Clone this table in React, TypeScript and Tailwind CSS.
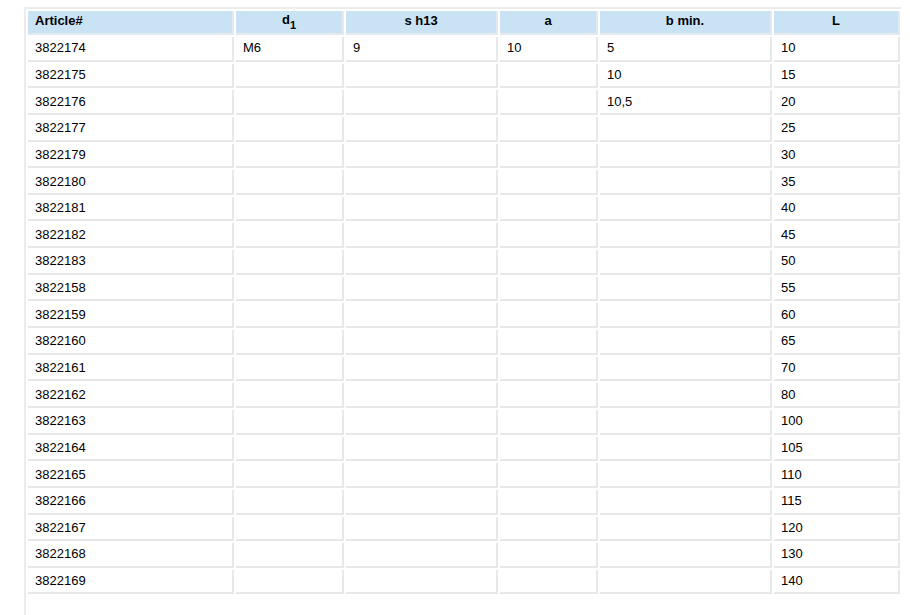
const rows: string[][] = [
  ["3822174", "M6", "9", "10", "5", "10"],
  ["3822175", "", "", "", "10", "15"],
  ["3822176", "", "", "", "10,5", "20"],
  ["3822177", "", "", "", "", "25"],
  ["3822179", "", "", "", "", "30"],
  ["3822180", "", "", "", "", "35"],
  ["3822181", "", "", "", "", "40"],
  ["3822182", "", "", "", "", "45"],
  ["3822183", "", "", "", "", "50"],
  ["3822158", "", "", "", "", "55"],
  ["3822159", "", "", "", "", "60"],
  ["3822160", "", "", "", "", "65"],
  ["3822161", "", "", "", "", "70"],
  ["3822162", "", "", "", "", "80"],
  ["3822163", "", "", "", "", "100"],
  ["3822164", "", "", "", "", "105"],
  ["3822165", "", "", "", "", "110"],
  ["3822166", "", "", "", "", "115"],
  ["3822167", "", "", "", "", "120"],
  ["3822168", "", "", "", "", "130"],
  ["3822169", "", "", "", "", "140"],
];

export default function App() {
  return (
    <div className="w-[910px] h-[615px] bg-white overflow-hidden font-['Liberation_Sans',Arial,sans-serif] text-[13px] text-black">
      <div className="ml-[24px] mt-[7px] w-[877px] h-[620px] border-l-2 border-t-2 border-[#ececec]">
        <table className="table-fixed border-separate border-spacing-[2px] w-[876px]">
          <colgroup>
            <col className="w-[206px]" />
            <col className="w-[108px]" />
            <col className="w-[152px]" />
            <col className="w-[98px]" />
            <col className="w-[172px]" />
            <col className="w-[126px]" />
          </colgroup>
          <thead>
            <tr>
              <th className="h-[24px] bg-[#c9e3f5] border-r-2 border-b-2 border-[#e3e9ee] pl-[7px] pr-2 pb-[3px] text-left font-bold leading-none">
                Article#
              </th>
              <th className="h-[24px] bg-[#c9e3f5] border-r-2 border-b-2 border-[#e3e9ee] px-2 pb-[3px] text-center font-bold leading-none">
                d<sub className="text-[11px] align-[-3px] leading-none">1</sub>
              </th>
              <th className="h-[24px] bg-[#c9e3f5] border-r-2 border-b-2 border-[#e3e9ee] px-2 pb-[3px] text-center font-bold leading-none">
                s h13
              </th>
              <th className="h-[24px] bg-[#c9e3f5] border-r-2 border-b-2 border-[#e3e9ee] px-2 pb-[3px] text-center font-bold leading-none">
                a
              </th>
              <th className="h-[24px] bg-[#c9e3f5] border-r-2 border-b-2 border-[#e3e9ee] px-2 pb-[3px] text-center font-bold leading-none">
                b min.
              </th>
              <th className="h-[24px] bg-[#c9e3f5] border-r-2 border-b-2 border-[#e3e9ee] px-2 pb-[3px] text-center font-bold leading-none">
                L
              </th>
            </tr>
          </thead>
          <tbody>
            {rows.map((r) => (
              <tr key={r[0]}>
                {r.map((v, i) => (
                  <td
                    key={i}
                    className="h-[24.65px] border-r-2 border-b-2 border-[#e8e8e8] pl-[7px] pr-2 pb-px leading-none align-middle"
                  >
                    {v}
                  </td>
                ))}
              </tr>
            ))}
          </tbody>
        </table>
      </div>
    </div>
  );
}
